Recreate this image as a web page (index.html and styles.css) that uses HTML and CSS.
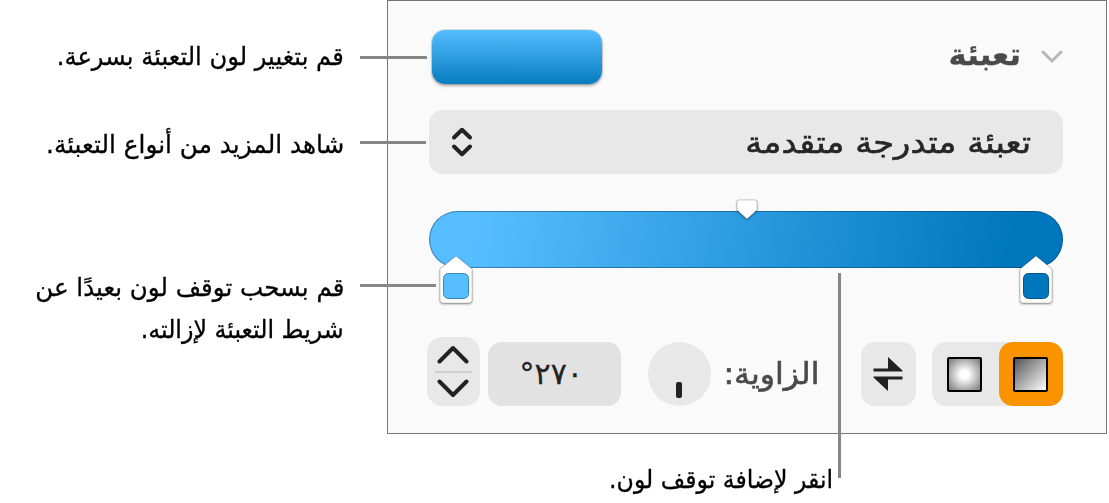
FILE: index.html
```html
<!DOCTYPE html>
<html lang="ar" dir="rtl">
<head>
  <meta charset="UTF-8">
  <meta name="viewport" content="width=device-width, initial-scale=1.0">
  <title>تعبئة</title>
  <link rel="stylesheet" href="styles.css">
</head>
<body>
  <div class="figure">
    <section class="panel">
      <header class="panel-header">
        <svg class="chevron" width="24" height="16" viewBox="0 0 24 16"><path d="M3 3l9 9 9-9"/></svg>
        <h1><span class="fit fit-title">تعبئة</span></h1>
        <button class="swatch" aria-label="لون التعبئة"></button>
      </header>

      <div class="select">
        <span class="fit fit-select">تعبئة متدرجة متقدمة</span>
        <svg width="22" height="30" viewBox="0 0 22 30"><path d="M3 10.500l8-7.700 8 7.700M3 19.500l8 7.700 8-7.700"/></svg>
      </div>

      <div class="gradient-bar">
        <svg class="midpoint" width="26" height="26" viewBox="0 0 26 26"><path d="M5 3h16q2 0 2 2v8l-10 9-10-9V5q0-2 2-2z"/></svg>
        <svg class="stop stop-start" width="40" height="56" viewBox="0 0 40 56">
          <path d="M20 4l16 13v31q0 3-3 3H7q-3 0-3-3V17z"/>
          <rect x="7.500" y="21.500" width="25" height="25" rx="5"/>
        </svg>
        <svg class="stop stop-end" width="40" height="56" viewBox="0 0 40 56">
          <path d="M20 4l16 13v31q0 3-3 3H7q-3 0-3-3V17z"/>
          <rect x="7.500" y="21.500" width="25" height="25" rx="5"/>
        </svg>
      </div>

      <div class="controls">
        <div class="segmented">
          <button class="segment selected"><i class="icon-linear"></i></button>
          <button class="segment"><i class="icon-radial"></i></button>
        </div>
        <button class="flip">
          <svg width="30" height="36" viewBox="0 0 30 36"><path d="M.500 15.500v-3H15V1l14.500 13.500v1zM29.500 20.500v3H15V35L.500 21.500v-1z"/></svg>
        </button>
        <label class="angle-label"><span class="fit fit-angle">الزاوية:</span></label>
        <div class="dial"><i></i></div>
        <div class="angle-field"><span class="fit">٢٧٠°</span></div>
        <div class="stepper">
          <svg width="32" height="20" viewBox="0 0 32 20"><path d="M2.500 17.500L16 4l13.500 13.500"/></svg>
          <hr>
          <svg width="32" height="20" viewBox="0 0 32 20"><path d="M2.500 2.500L16 16 29.500 2.500"/></svg>
        </div>
      </div>
    </section>

    <aside class="notes">
      <p class="note-color"><span class="fit">قم بتغيير لون التعبئة بسرعة.</span></p>
      <p class="note-types"><span class="fit">شاهد المزيد من أنواع التعبئة.</span></p>
      <p class="note-drag"><span class="fit">قم بسحب توقف لون بعيدًا عن</span><br><span class="fit fit-last">شريط التعبئة لإزالته.</span></p>
    </aside>

    <p class="note-add"><span class="fit">انقر لإضافة توقف لون.</span></p>

    <i class="leader leader-color"></i>
    <i class="leader leader-types"></i>
    <i class="leader leader-drag"></i>
    <i class="leader leader-add"></i>
  </div>
</body>
</html>
```
FILE: styles.css
```css
* {
  box-sizing: border-box;
}
body {
  margin: 0;
  background: #fff;
  color: #000;
  font-family: "DejaVu Sans", sans-serif;
  font-size: 25px;
}
h1, p {
  margin: 0;
}
button {
  border: 0;
  padding: 0;
}
.figure {
  position: relative;
  display: grid;
  grid-template-columns: 720px 387px;
  grid-template-rows: 434px 69px;
  width: 1109px;
  height: 503px;
  padding-right: 2px;
  overflow: hidden;
}
.fit {
  display: inline-block;
  white-space: nowrap;
  transform-origin: right center;
  -webkit-text-stroke: 0.3px currentColor;
}
.fit-title {
  transform: scaleX(1.02);
}
.fit-select {
  transform: scaleX(1.125);
}
.fit-angle {
  transform: scaleX(1.05);
}
.select .fit, .angle-label .fit {
  -webkit-text-stroke-width: 0.6px;
}
.note-color .fit {
  transform: scaleX(0.967);
}
.note-types .fit {
  transform: scaleX(0.99);
}
.note-drag .fit {
  transform: scaleX(0.98);
}
.note-drag .fit-last {
  transform: scaleX(0.95);
}
.note-add .fit {
  transform: scaleX(0.945);
}

.panel {
  border: 1px solid #77757a;
  padding: 29px 43px 0 39px;
  background: #fafafa;
}
.panel-header {
  display: flex;
  align-items: center;
  height: 54px;
}
.chevron {
  margin-right: -1px;
}
.chevron path {
  fill: none;
  stroke: #b8b8b8;
  stroke-width: 3;
  stroke-linecap: round;
}
.panel-header h1 {
  margin-right: 19px;
  padding-bottom: 4px;
  font-size: 30px;
  font-weight: bold;
  line-height: 40px;
  color: #4a4a4a;
}
.swatch {
  width: 170px;
  height: 54px;
  margin-right: auto;
  margin-left: 5px;
  border-radius: 13px;
  background: linear-gradient(#53bdff, #087cc0);
  box-shadow: 0 0 0 1px rgba(0,0,0,0.1), 0 2px 3px rgba(0,0,0,0.3);
}
.select {
  display: flex;
  align-items: center;
  justify-content: space-between;
  height: 64px;
  margin: 26px 0 0 2px;
  padding: 0 32px 0 22px;
  border-radius: 14px;
  background: #e8e8e8;
  color: #262626;
  font-size: 30px;
}
.select path, .stepper path {
  fill: none;
  stroke: #222;
  stroke-width: 4;
  stroke-linecap: round;
  stroke-linejoin: round;
}

.gradient-bar {
  position: relative;
  height: 57px;
  margin: 37px 0 0 2px;
  border-radius: 29px;
  border: 1px solid rgba(0,40,80,0.4);
  background: linear-gradient(100deg, #56beff 8%, #0076bd 92%) border-box;
}
.midpoint, .stop {
  position: absolute;
  filter: drop-shadow(0 1px 1px rgba(0,0,0,0.4));
}
.midpoint path, .stop path {
  fill: #fff;
  stroke: rgba(0,0,0,0.18);
}
.midpoint {
  left: 304px;
  top: -15px;
}
.stop {
  top: 40px;
}
.stop-start {
  left: 6px;
}
.stop-end {
  right: 6px;
}
.stop-start rect {
  fill: #56beff;
  stroke: #3688b8;
}
.stop-end rect {
  fill: #0076bd;
  stroke: #00558e;
}

.controls {
  display: flex;
  align-items: flex-end;
  height: 69px;
  margin-top: 69px;
}
.segmented {
  display: flex;
  width: 131px;
  height: 64px;
  border-radius: 14px;
  background: #e8e8e8;
}
.segment {
  display: flex;
  align-items: center;
  justify-content: center;
  width: 64px;
  padding-right: 1px;
  border-radius: 14px;
  background: none;
}
.segment.selected {
  background: #fa9300;
}
.segment + .segment {
  width: 67px;
  padding-right: 3px;
}
.segment i {
  width: 35px;
  height: 35px;
  border: 2px solid #000;
  border-radius: 2px;
}
.icon-linear {
  background: linear-gradient(135deg, #555, #fff);
}
.icon-radial {
  background: radial-gradient(circle, #fff 18%, #777 100%);
}
.flip {
  display: flex;
  align-items: center;
  justify-content: center;
  width: 55px;
  height: 64px;
  margin-right: 16px;
  padding-right: 1px;
  border-radius: 14px;
  background: #e8e8e8;
}
.flip path {
  fill: #222;
}
.angle-label {
  display: flex;
  align-items: center;
  width: 96px;
  height: 64px;
  margin-right: 42px;
  padding-bottom: 2px;
  color: #4a4a4a;
  font-size: 30px;
}
.dial {
  display: flex;
  justify-content: center;
  width: 64px;
  height: 64px;
  margin-right: 12px;
  padding-top: 40px;
  border-radius: 50%;
  background: #e8e8e8;
}
.dial i {
  width: 6px;
  height: 16px;
  border-radius: 2px;
  background: #222;
}
.angle-field {
  display: flex;
  align-items: center;
  justify-content: center;
  width: 133px;
  height: 64px;
  margin-right: 27px;
  padding: 0 6px 1px 0;
  border-radius: 14px;
  background: #e2e2e2;
  color: #222;
  font-size: 30px;
}
.stepper {
  display: flex;
  flex-direction: column;
  align-items: center;
  justify-content: space-between;
  width: 53px;
  height: 69px;
  margin-right: 8px;
  padding: 7px 0;
  border-radius: 15px;
  background: #e8e8e8;
}
.stepper hr {
  width: 37px;
  height: 2px;
  margin: 0;
  border: 0;
  background: #cfcfcf;
}

.notes {
  padding: 36px 43px 0 0;
  line-height: 42px;
}
.note-types {
  margin-top: 46px;
}
.note-drag {
  margin-top: 101px;
}
.note-add {
  padding: 25px 274px 0 0;
  line-height: 42px;
}

.leader {
  position: absolute;
  left: 360px;
  height: 3px;
  background: #868686;
}
.leader-color {
  top: 56px;
  width: 67px;
}
.leader-types {
  top: 141px;
  width: 66px;
}
.leader-drag {
  top: 284px;
  width: 76px;
}
.leader-add {
  left: 838px;
  top: 273px;
  width: 3px;
  height: 205px;
}
```
